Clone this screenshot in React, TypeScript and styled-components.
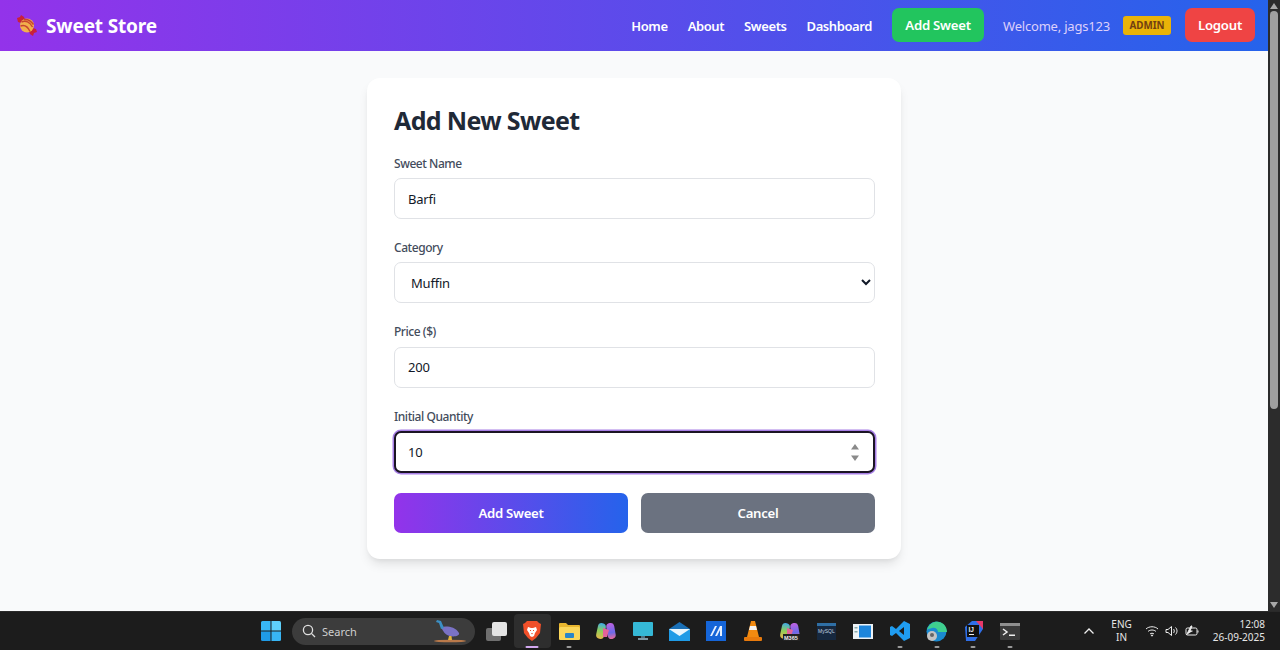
import React from 'react';
import styled, { createGlobalStyle } from 'styled-components';

const GlobalStyle = createGlobalStyle`
  html, body {
    margin: 0;
    padding: 0;
    height: 100%;
    overflow: hidden;
    font-family: "Noto Sans", "Open Sans", sans-serif;
  }
  * { box-sizing: border-box; }
`;

const Screen = styled.div`
  width: 1280px;
  height: 650px;
  display: flex;
  flex-direction: column;
`;

const Viewport = styled.div`
  height: 611px;
  display: flex;
`;

const Page = styled.div`
  width: 1268px;
  background: #f9fafb;
`;

const Scrollbar = styled.div`
  width: 12px;
  background: #2c2c2c;
  display: flex;
  flex-direction: column;
  align-items: center;
  justify-content: space-between;
  padding: 3px 0;
`;

const ScrollThumb = styled.div`
  width: 8px;
  height: 398px;
  margin-top: 2px;
  background: #9f9f9f;
  border-radius: 4px;
`;

const ScrollGroup = styled.div`
  display: flex;
  flex-direction: column;
  align-items: center;
`;

const ScrollArrow = styled.div<{ $down?: boolean }>`
  width: 0;
  height: 0;
  border-left: 4px solid transparent;
  border-right: 4px solid transparent;
  ${p => (p.$down ? 'border-top: 6px solid #a8a8a8;' : 'border-bottom: 6px solid #a8a8a8;')}
`;

const Nav = styled.nav`
  height: 51px;
  padding: 0 13px 0 17px;
  display: flex;
  align-items: center;
  justify-content: space-between;
  background: linear-gradient(90deg, #9333ea, #2563eb);
  color: #fff;
`;

const Brand = styled.div`
  display: flex;
  align-items: center;
  gap: 9px;
  font-size: 19px;
  font-weight: 700;
  letter-spacing: -0.15px;
`;

const NavItems = styled.div`
  display: flex;
  align-items: center;
`;

const NavLink = styled.a`
  font-size: 13px;
  font-weight: 600;
  letter-spacing: -0.4px;
  color: #fff;
  margin-right: 20px;
`;

const NavButton = styled.button<{ $bg: string; $w: number }>`
  width: ${p => p.$w}px;
  height: 34px;
  margin-top: -1px;
  border: 0;
  border-radius: 7px;
  background: ${p => p.$bg};
  color: #fff;
  font-family: inherit;
  font-size: 13.2px;
  font-weight: 600;
  letter-spacing: -0.25px;
  padding: 0;
`;

const Welcome = styled.span`
  margin-left: 19px;
  font-size: 13px;
  letter-spacing: -0.2px;
  color: #ddd0fb;
`;

const Badge = styled.span`
  margin-left: 13px;
  margin-right: 14px;
  width: 48px;
  height: 19px;
  display: flex;
  align-items: center;
  justify-content: center;
  border-radius: 3px;
  background: #eab308;
  color: #713f12;
  font-size: 9.8px;
  font-weight: 700;
`;

const Main = styled.main`
  padding-top: 27px;
  display: flex;
  justify-content: center;
`;

const Card = styled.form`
  width: 534px;
  height: 481px;
  padding: 24px 26px 0 27px;
  background: #fff;
  border-radius: 13px;
  box-shadow: 0 7px 11px -2px rgba(0, 0, 0, 0.1), 0 3px 5px -2px rgba(0, 0, 0, 0.06);
`;

const Title = styled.h1`
  margin: 0 0 17.6px;
  height: 36px;
  line-height: 36px;
  font-size: 25px;
  font-weight: 700;
  letter-spacing: -0.65px;
  color: #1f2937;
`;

const Field = styled.div`
  margin-bottom: 20.6px;
  position: relative;
`;

const Label = styled.label`
  display: block;
  height: 15px;
  margin-bottom: 7.4px;
  line-height: 15px;
  font-size: 12px;
  font-weight: 500;
  letter-spacing: -0.45px;
  color: #434c5c;
`;

const Input = styled.input<{ $focused?: boolean }>`
  display: block;
  width: 100%;
  height: 41.4px;
  padding: 0 ${p => (p.$focused ? 12 : 13)}px;
  border: 1px solid ${p => (p.$focused ? '#1b1424' : '#e0e2e6')};
  border-radius: 7px;
  background: #fff;
  outline: 0;
  font-family: inherit;
  font-size: 13px;
  letter-spacing: -0.2px;
  color: #111827;
  ${p => p.$focused && 'border-width: 2px; box-shadow: 0 0 0 1.5px #a77fe6;'}
`;

const Select = styled.select`
  display: block;
  width: 100%;
  height: 41px;
  margin-bottom: 21px;
  padding: 0 12px;
  border: 1px solid #e0e2e6;
  border-radius: 7px;
  background: #fff;
  font-family: inherit;
  font-size: 13px;
  letter-spacing: -0.2px;
  color: #111827;
`;

const Spinner = styled.svg`
  position: absolute;
  right: 16px;
  bottom: 12px;
`;

const Actions = styled.div`
  display: flex;
  gap: 13px;
`;

const Submit = styled.button<{ $secondary?: boolean }>`
  flex: 1;
  height: 40px;
  border: 0;
  border-radius: 7px;
  background: ${p => (p.$secondary ? '#6b7280' : 'linear-gradient(90deg, #9333ea, #2563eb)')};
  color: #fff;
  font-family: inherit;
  font-size: 13.2px;
  font-weight: 600;
  letter-spacing: -0.3px;
`;

const Taskbar = styled.footer`
  height: 39px;
  display: flex;
  align-items: center;
  padding: 0 15px 0 261px;
  background: #1c1c1c;
  color: #e6e6e6;
  border-top: 1px solid #2a2a2a;
`;

const SearchPill = styled.div`
  width: 183px;
  height: 27px;
  margin-left: 11px;
  margin-right: 11px;
  padding: 0 8px 0 10px;
  display: flex;
  align-items: center;
  gap: 6px;
  border-radius: 14px;
  background: #3c3c3c;
  font-size: 11px;
  color: #cfcfcf;
`;

const SearchText = styled.span`
  flex: 1;
`;

const Pinned = styled.div`
  margin-left: 7px;
  display: flex;
  align-items: center;
`;

const AppSlot = styled.div<{ $active?: boolean }>`
  position: relative;
  width: 36.75px;
  height: 34px;
  display: flex;
  align-items: center;
  justify-content: center;
  border-radius: 4px;
  background: ${p => (p.$active ? '#2e2e2e' : 'transparent')};
`;

const RunDot = styled.span<{ $active?: boolean }>`
  position: absolute;
  bottom: 0;
  left: 50%;
  transform: translateX(-50%);
  width: ${p => (p.$active ? 13 : 5)}px;
  height: 2.5px;
  border-radius: 2px;
  background: ${p => (p.$active ? '#d2a8f0' : '#9a9a9a')};
`;

const Tray = styled.div`
  margin-left: auto;
  display: flex;
  align-items: center;
`;

const Lang = styled.div`
  margin: 0 13px 0 16px;
  font-size: 10px;
  line-height: 13.5px;
  text-align: center;
`;

const TrayIcons = styled.div`
  display: flex;
  align-items: center;
  gap: 6px;
`;

const Clock = styled.div`
  margin-left: 14px;
  font-size: 10px;
  line-height: 13.5px;
  text-align: right;
`;

const CandyIcon = () => (
  <svg width="20" height="21" viewBox="0 0 20 21">
    <path d="M0 3l3-1 1-2 3 2 1 3-4 3-3-1z" fill="#c9213a" />
    <path d="M20 17l-3 1-1 3-3-2-1-3 4-3 3 1z" fill="#c9213a" />
    <circle cx="10" cy="10.5" r="7" fill="#f2b04c" />
    <path d="M4.5 7c4-2 8.5 0 11 5M3.5 11c4-1.5 7.5 1 9.5 5.5M7 4.5c3-.5 7 1.5 9.5 5" stroke="#c8452f" strokeWidth="1.5" fill="none" />
  </svg>
);

const WindowsIcon = () => (
  <svg width="20" height="20" viewBox="0 0 20 20">
    <path d="M0 1.5A1.5 1.5 0 011.5 0h8v9.5H0z" fill="#38b6f5" />
    <path d="M10.5 0h8A1.5 1.5 0 0120 1.5v8h-9.5z" fill="#5fd0fb" />
    <path d="M0 10.5h9.5V20h-8A1.5 1.5 0 010 18.5z" fill="#1f9be6" />
    <path d="M10.5 10.5H20v8a1.5 1.5 0 01-1.5 1.5h-8z" fill="#38b6f5" />
  </svg>
);

const BirdIcon = () => (
  <svg width="34" height="24" viewBox="0 0 34 24">
    <ellipse cx="17" cy="22" rx="16" ry="1.3" fill="#b9794a" />
    <path d="M8 8c5-1 14-1 18 6 1 3-5 4-9 3-5-1-7-5-9-9z" fill="#7a72c4" />
    <path d="M4 1l4 1 3 7-3 1-2-6-3-1z" fill="#3b8fc4" />
    <path d="M16 17l-1 4h4l-.5-4z" fill="#e2b23a" />
  </svg>
);

const TaskViewIcon = () => (
  <svg width="21" height="19" viewBox="0 0 21 19">
    <rect x="0" y="6" width="15" height="13" rx="2" fill="#6f6f6f" />
    <rect x="6" y="0" width="15" height="14" rx="2" fill="#e4e4e4" />
  </svg>
);

const BraveIcon = () => (
  <svg width="18" height="20" viewBox="0 0 18 20">
    <path d="M4 0h10l2 2 2 1-1 9-4 5-4 3-4-3-4-5-1-9 2-1z" fill="#f1502a" />
    <path d="M5 6l3 1h2l3-1 1 3-2 3-1 3-2 1-2-1-1-3-2-3z" fill="#fff" />
    <path d="M7 9h1v1H7zM10 9h1v1h-1zM8 12h2l-1 1.5z" fill="#f1502a" />
  </svg>
);

const FolderIcon = () => (
  <svg width="21" height="18" viewBox="0 0 21 18">
    <path d="M0 2a1 1 0 011-1h6l2 2h11a1 1 0 011 1v12a2 2 0 01-2 2H2a2 2 0 01-2-2z" fill="#e8b62f" />
    <rect x="0" y="5" width="21" height="13" rx="1.5" fill="#fbd75b" />
    <rect x="6" y="11" width="9" height="5" rx="1" fill="#2b86c9" />
  </svg>
);

const CopilotIcon = ({ badge }: { badge?: boolean }) => (
  <svg width="20" height="20" viewBox="0 0 20 20">
    <defs>
      <linearGradient id="copilotLeft" x1="0" y1="0" x2="0" y2="1">
        <stop offset="0" stopColor="#3fa9e8" />
        <stop offset="0.5" stopColor="#8fcf5a" />
        <stop offset="1" stopColor="#e8b84a" />
      </linearGradient>
      <linearGradient id="copilotRight" x1="0" y1="0" x2="0" y2="1">
        <stop offset="0" stopColor="#c060e0" />
        <stop offset="0.6" stopColor="#6a6ae8" />
        <stop offset="1" stopColor="#e86a9a" />
      </linearGradient>
    </defs>
    <rect x="1" y="2" width="8" height="16" rx="4" fill="url(#copilotLeft)" transform="rotate(12 5 10)" />
    <rect x="11" y="2" width="8" height="16" rx="4" fill="url(#copilotRight)" transform="rotate(-10 15 10)" />
    <path d="M7 7l6 2-2 7H7z" fill="#e4639a" />
    {badge && <rect x="3" y="13" width="17" height="7" fill="#222" />}
    {badge && <text x="4" y="19" fontSize="5.5" fontWeight="700" fill="#eee" fontFamily="Liberation Sans">M365</text>}
  </svg>
);

const MonitorIcon = () => (
  <svg width="20" height="19" viewBox="0 0 20 19">
    <rect width="20" height="14" rx="1" fill="#35b8d6" />
    <rect x="8" y="14" width="4" height="3" fill="#4c6f80" />
    <rect x="5" y="16" width="10" height="2" fill="#7f97a3" />
  </svg>
);

const MailIcon = () => (
  <svg width="21" height="19" viewBox="0 0 21 19">
    <path d="M0 7l10.5-7L21 7z" fill="#1a6fb5" />
    <rect y="7" width="21" height="12" fill="#1f9be6" />
    <path d="M0 7h21l-10.5 7z" fill="#e9f6fd" />
  </svg>
);

const AzureIcon = () => (
  <svg width="20" height="20" viewBox="0 0 20 20">
    <rect width="20" height="20" fill="#1565d8" />
    <path d="M4 15l5-10h2L6 15zM9 15l5-10h2v10h-2v-6l-3 6z" fill="#e6f0ff" />
  </svg>
);

const VlcIcon = () => (
  <svg width="20" height="21" viewBox="0 0 20 21">
    <path d="M8 0h4l4 16H4z" fill="#f28a10" />
    <path d="M7 5h6l1 4H6z" fill="#f4f4f4" />
    <rect x="1" y="16" width="18" height="4" rx="1" fill="#e87a0c" />
  </svg>
);

const MysqlIcon = () => (
  <svg width="19" height="17" viewBox="0 0 19 17">
    <rect width="19" height="17" fill="#16283f" />
    <rect width="19" height="3" fill="#2f6fa5" />
    <text x="1" y="10" fontSize="5" fill="#c4d2e0" fontFamily="Liberation Sans">MySQL</text>
  </svg>
);

const PanelIcon = () => (
  <svg width="20" height="15" viewBox="0 0 20 15">
    <rect width="20" height="15" fill="#eef3f6" />
    <rect x="6" y="1.5" width="12" height="12" fill="#1e86dc" />
    <rect x="1.5" y="3" width="3" height="1.5" fill="#8aa" />
    <rect x="1.5" y="7" width="3" height="1.5" fill="#8aa" />
  </svg>
);

const VscodeIcon = () => (
  <svg width="20" height="20" viewBox="0 0 20 20">
    <path d="M14 0l6 3v14l-6 3-8-8-4 3-2-1V6l2-1 4 3zm0 6l-5 4 5 4z" fill="#1f9cf0" />
  </svg>
);

const EdgeIcon = () => (
  <svg width="21" height="21" viewBox="0 0 21 21">
    <circle cx="10.5" cy="10.5" r="10" fill="#1a8ad0" />
    <path d="M1 9C3 2 9 0 13 1c5 1 8 5 8 10h-9c0-3-3-5-6-4-2 .5-4 1-5 2z" fill="#3fcf8e" />
    <circle cx="6" cy="15" r="5" fill="#c4c4c4" />
    <circle cx="6" cy="14" r="2" fill="#666" />
  </svg>
);

const IntellijIcon = () => (
  <svg width="20" height="20" viewBox="0 0 20 20">
    <path d="M2 6l7-6h11v8l-8 12H3z" fill="#2f6fe8" />
    <path d="M13 0h7v8z" fill="#e8396a" />
    <rect x="4" y="4" width="12" height="12" fill="#111" />
    <rect x="6" y="13" width="5" height="1" fill="#eee" />
    <text x="5.5" y="11" fontSize="6.5" fontWeight="700" fill="#eee" fontFamily="Liberation Sans">IJ</text>
  </svg>
);

const TerminalIcon = () => (
  <svg width="20" height="17" viewBox="0 0 20 17">
    <rect width="20" height="17" rx="1" fill="#3a3a3a" />
    <rect width="20" height="3" fill="#8f8f8f" />
    <path d="M3 6l4 3-4 3" stroke="#eee" strokeWidth="1.5" fill="none" />
    <rect x="9" y="11.5" width="6" height="1.5" fill="#eee" />
  </svg>
);

const pinned = [
  { key: 'brave', icon: <BraveIcon />, active: true, running: true },
  { key: 'folder', icon: <FolderIcon />, running: true },
  { key: 'copilot', icon: <CopilotIcon /> },
  { key: 'monitor', icon: <MonitorIcon /> },
  { key: 'mail', icon: <MailIcon /> },
  { key: 'azure', icon: <AzureIcon /> },
  { key: 'vlc', icon: <VlcIcon /> },
  { key: 'm365', icon: <CopilotIcon badge /> },
  { key: 'mysql', icon: <MysqlIcon /> },
  { key: 'panel', icon: <PanelIcon /> },
  { key: 'vscode', icon: <VscodeIcon />, running: true },
  { key: 'edge', icon: <EdgeIcon />, running: true },
  { key: 'intellij', icon: <IntellijIcon />, running: true },
  { key: 'terminal', icon: <TerminalIcon />, running: true },
];

const App: React.FC = () => {
  return (
    <Screen>
      <GlobalStyle />
      <Viewport>
        <Page>
          <Nav>
            <Brand>
              <CandyIcon />
              Sweet Store
            </Brand>
            <NavItems>
              <NavLink>Home</NavLink>
              <NavLink>About</NavLink>
              <NavLink>Sweets</NavLink>
              <NavLink>Dashboard</NavLink>
              <NavButton $bg="#22c55e" $w={92}>Add Sweet</NavButton>
              <Welcome>Welcome, jags123</Welcome>
              <Badge>ADMIN</Badge>
              <NavButton $bg="#ef4444" $w={70}>Logout</NavButton>
            </NavItems>
          </Nav>
          <Main>
            <Card>
              <Title>Add New Sweet</Title>
              <Field>
                <Label>Sweet Name</Label>
                <Input defaultValue="Barfi" />
              </Field>
              <Field>
                <Label>Category</Label>
                <Select defaultValue="Muffin">
                  <option>Muffin</option>
                </Select>
              </Field>
              <Field>
                <Label>Price ($)</Label>
                <Input defaultValue="200" />
              </Field>
              <Field>
                <Label>Initial Quantity</Label>
                <Input $focused defaultValue="10" />
                <Spinner width="8" height="17" viewBox="0 0 8 17">
                  <path d="M4 0L8 5.5H0zM0 11.5h8L4 17z" fill="#8a8a8a" />
                </Spinner>
              </Field>
              <Actions>
                <Submit type="button">Add Sweet</Submit>
                <Submit type="button" $secondary>Cancel</Submit>
              </Actions>
            </Card>
          </Main>
        </Page>
        <Scrollbar>
          <ScrollGroup>
            <ScrollArrow />
            <ScrollThumb />
          </ScrollGroup>
          <ScrollArrow $down />
        </Scrollbar>
      </Viewport>
      <Taskbar>
        <WindowsIcon />
        <SearchPill>
          <svg width="14" height="14" viewBox="0 0 14 14" fill="none" stroke="#e0e0e0" strokeWidth="1.3">
            <circle cx="6" cy="6" r="4.6" />
            <path d="M9.4 9.4L13 13" />
          </svg>
          <SearchText>Search</SearchText>
          <BirdIcon />
        </SearchPill>
        <TaskViewIcon />
        <Pinned>
          {pinned.map(app => (
            <AppSlot key={app.key} $active={app.active}>
              {app.icon}
              {app.running && <RunDot $active={app.active} />}
            </AppSlot>
          ))}
        </Pinned>
        <Tray>
          <svg width="12" height="8" viewBox="0 0 12 8" fill="none" stroke="#eee" strokeWidth="1.3">
            <path d="M1.5 6.5L6 2l4.5 4.5" />
          </svg>
          <Lang>ENG<br />IN</Lang>
          <TrayIcons>
            <svg width="14" height="12" viewBox="0 0 14 12" fill="none" stroke="#eee" strokeWidth="1">
              <path d="M1 4c3-3 9-3 12 0M3 6.5c2-2 6-2 8 0M5 9c1-1 3-1 4 0" />
              <circle cx="7" cy="10.5" r=".6" fill="#eee" />
            </svg>
            <svg width="14" height="12" viewBox="0 0 14 12" fill="none" stroke="#eee" strokeWidth="1">
              <path d="M1 4.5h2L6.5 1.5v9L3 7.5H1zM8.5 4c1 1 1 3 0 4M10.5 2.5c2 2 2 5 0 7" />
            </svg>
            <svg width="14" height="12" viewBox="0 0 14 12" fill="none" stroke="#eee" strokeWidth="1">
              <rect x="1" y="3" width="11" height="7" rx="1.5" />
              <path d="M13 5.5v2" />
              <path d="M1.5 10L6 1h1L5 6h2.5" fill="#eee" />
            </svg>
          </TrayIcons>
          <Clock>12:08<br />26-09-2025</Clock>
        </Tray>
      </Taskbar>
    </Screen>
  );
};

export default App;
